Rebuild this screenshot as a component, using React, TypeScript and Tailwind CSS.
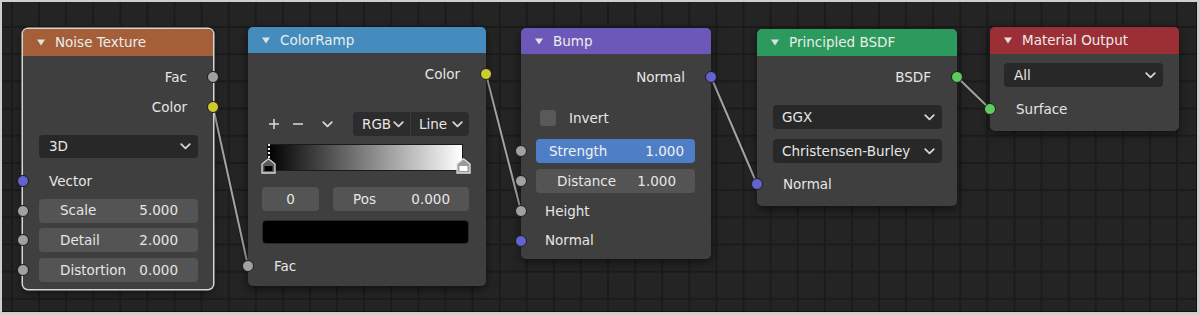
import React from "react";

type SockColor = "gray" | "yellow" | "blue" | "green";

function Socket({ side, color }: { side: "left" | "right"; color: SockColor }) {
  const c =
    color === "gray"
      ? "bg-[#a1a1a1]"
      : color === "yellow"
      ? "bg-[#cccc2e]"
      : color === "blue"
      ? "bg-[#6363cf]"
      : "bg-[#5fca5f]";
  const s = side === "left" ? "-left-[6px]" : "-right-[6px]";
  return (
    <span
      className={`absolute top-1/2 -translate-y-1/2 w-[12px] h-[12px] rounded-full border border-[#1c1c1c] ${s} ${c}`}
    />
  );
}

function Chevron() {
  return (
    <svg width="11" height="7" viewBox="0 0 11 7" className="shrink-0">
      <polyline points="1.2,1.2 5.5,5.4 9.8,1.2" fill="none" stroke="#d8d8d8" strokeWidth="1.7" strokeLinecap="round" strokeLinejoin="round" />
    </svg>
  );
}

function Tri() {
  return (
    <svg width="8" height="7" viewBox="0 0 8 7" className="shrink-0">
      <polygon points="0,0.5 8,0.5 4,6.5" fill="#e0e0e0" />
    </svg>
  );
}

function Header({ title, color }: { title: string; color: string }) {
  return (
    <div className={`flex items-center gap-[10px] pl-[14px] rounded-t-[5px] text-[#ececec] ${color}`}>
      <Tri />
      <span>{title}</span>
    </div>
  );
}

function Marker({ fill, inner, outline }: { fill: string; inner: string; outline: string }) {
  return (
    <svg width="15" height="16" viewBox="0 0 15 16">
      <polygon points="1,6 7.5,0.8 14,6 14,15 1,15" fill={fill} stroke={outline} strokeWidth="1.3" />
      <rect x="3.5" y="8" width="8" height="5" fill={inner} />
    </svg>
  );
}

export default function App() {
  return (
    <div className="w-[1200px] h-[315px] bg-[#cfcfcf] pl-[2px] pt-[2px] pr-[3px] pb-[3px] font-['DejaVu_Sans',sans-serif] text-[13.5px] text-[#e6e6e6]">
      <div className="relative w-full h-full overflow-hidden border-r border-b border-[#111] bg-[#242424] bg-[linear-gradient(to_right,#1b1b1b_2px,transparent_2px),linear-gradient(to_bottom,#1b1b1b_2px,transparent_2px)] bg-[size:27.1px_27.2px] bg-[position:9px_24px]">
        {/* links */}
        <svg className="absolute inset-0 pointer-events-none" width="1195" height="310">
          <g strokeLinecap="round">
            <line x1="211" y1="104.7" x2="246" y2="264" stroke="#1e1e1e" strokeWidth="4" />
            <line x1="484" y1="72" x2="519" y2="209" stroke="#1e1e1e" strokeWidth="4" />
            <line x1="709" y1="75" x2="755" y2="182" stroke="#1e1e1e" strokeWidth="4" />
            <line x1="955" y1="75" x2="988" y2="107" stroke="#1e1e1e" strokeWidth="4" />
            <line x1="211" y1="104.7" x2="246" y2="264" stroke="#a3a3a3" strokeWidth="2" />
            <line x1="484" y1="72" x2="519" y2="209" stroke="#a3a3a3" strokeWidth="2" />
            <line x1="709" y1="75" x2="755" y2="182" stroke="#a3a3a3" strokeWidth="2" />
            <line x1="955" y1="75" x2="988" y2="107" stroke="#a3a3a3" strokeWidth="2" />
          </g>
        </svg>

        {/* Noise Texture */}
        <div className="absolute left-[21px] top-[27px] w-[190px] h-[260px] rounded-[5px] bg-[#3f3f3f] shadow-[0_3px_10px_rgba(0,0,0,0.55)] ring-[1.5px] ring-[#d6d6d6] flex flex-col">
          <div className="h-[27px] flex flex-col [&>div]:h-full">
            <Header title="Noise Texture" color="bg-[#a45f39]" />
          </div>
          <div className="flex flex-col pt-[6px]">
            <div className="relative h-[30px] flex items-center justify-end pr-[26px]">
              Fac
              <Socket side="right" color="gray" />
            </div>
            <div className="relative h-[30px] flex items-center justify-end pr-[26px]">
              Color
              <Socket side="right" color="yellow" />
            </div>
            <div className="mt-[10px] h-[29px] flex items-center pl-[16px] pr-[15px]">
              <div className="w-full h-[23px] rounded-[4px] bg-[#282828] flex items-center justify-between pl-[10px] pr-[7px]">
                <span>3D</span>
                <Chevron />
              </div>
            </div>
            <div className="relative mt-[5px] h-[30px] flex items-center pl-[26px]">
              Vector
              <Socket side="left" color="blue" />
            </div>
            {[
              ["Scale", "5.000", "h-[29px]"],
              ["Detail", "2.000", "h-[30px]"],
              ["Distortion", "0.000", "h-[30px]"],
            ].map(([l, v, h]) => (
              <div key={l} className={`relative flex items-center pl-[16px] pr-[15px] ${h}`}>
                <div className="w-full h-[24px] rounded-[4px] bg-[#545454] flex items-center justify-between pl-[21px] pr-[20px]">
                  <span>{l}</span>
                  <span>{v}</span>
                </div>
                <Socket side="left" color="gray" />
              </div>
            ))}
          </div>
        </div>

        {/* ColorRamp */}
        <div className="absolute left-[246px] top-[25px] w-[238px] h-[259px] rounded-[5px] bg-[#3f3f3f] shadow-[0_3px_10px_rgba(0,0,0,0.55)] flex flex-col">
          <div className="h-[26px] flex flex-col [&>div]:h-full">
            <Header title="ColorRamp" color="bg-[#438cbd]" />
          </div>
          <div className="flex flex-col pt-[6px]">
            <div className="relative h-[30px] flex items-center justify-end pr-[26px]">
              Color
              <Socket side="right" color="yellow" />
            </div>
            <div className="mt-[23px] h-[24px] flex items-center pl-[20px] pr-[17px]">
              <div className="flex items-center gap-[12px] text-[#dedede]">
                <svg width="12" height="12" viewBox="0 0 12 12">
                  <path d="M6 1v10M1 6h10" stroke="#dcdcdc" strokeWidth="1.5" />
                </svg>
                <svg width="12" height="12" viewBox="0 0 12 12">
                  <path d="M1 6h10" stroke="#dcdcdc" strokeWidth="1.5" />
                </svg>
                <span className="ml-[6px]">
                  <Chevron />
                </span>
              </div>
              <div className="ml-auto flex h-[24px] rounded-[4px] bg-[#2c2c2c] overflow-hidden">
                <div className="w-[57px] flex items-center justify-between pl-[9px] pr-[6px]">
                  <span>RGB</span>
                  <Chevron />
                </div>
                <div className="w-[1px] bg-[#3a3a3a]" />
                <div className="w-[58px] flex items-center justify-between pl-[8px] pr-[6px]">
                  <span>Line</span>
                  <Chevron />
                </div>
              </div>
            </div>
            <div className="relative mt-[8px] ml-[19px] w-[196px] h-[27px]">
              <div className="w-full h-full border border-[#1a1a1a] bg-[linear-gradient(to_right,#000,#fff)]" />
              <div className="absolute left-[1px] top-[0px] h-[14px] border-l-[2px] border-dotted border-[#e8e8e8]" />
              <div className="absolute -left-[6px] top-[14px]">
                <Marker fill="#5a5a5a" inner="#000" outline="#d8d8d8" />
              </div>
              <div className="absolute -right-[8px] top-[14px]">
                <Marker fill="#9a9a9a" inner="#fff" outline="#e0e0e0" />
              </div>
            </div>
            <div className="mt-[16px] h-[24px] flex gap-[14px] pl-[14px] pr-[17px]">
              <div className="w-[57px] rounded-[4px] bg-[#545454] flex items-center justify-center">0</div>
              <div className="flex-1 rounded-[4px] bg-[#545454] flex items-center justify-between pl-[20px] pr-[19px]">
                <span>Pos</span>
                <span>0.000</span>
              </div>
            </div>
            <div className="mt-[9px] h-[24px] pl-[14px] pr-[17px]">
              <div className="w-full h-full rounded-[4px] bg-black border border-[#2a2a2a]" />
            </div>
            <div className="relative mt-[7px] h-[30px] flex items-center pl-[26px]">
              Fac
              <Socket side="left" color="gray" />
            </div>
          </div>
        </div>

        {/* Bump */}
        <div className="absolute left-[519px] top-[26px] w-[190px] h-[231px] rounded-[5px] bg-[#3f3f3f] shadow-[0_3px_10px_rgba(0,0,0,0.55)] flex flex-col">
          <div className="h-[26px] flex flex-col [&>div]:h-full">
            <Header title="Bump" color="bg-[#6c58b8]" />
          </div>
          <div className="flex flex-col pt-[8px]">
            <div className="relative h-[30px] flex items-center justify-end pr-[26px]">
              Normal
              <Socket side="right" color="blue" />
            </div>
            <div className="mt-[11px] h-[30px] flex items-center pl-[19px] gap-[13px]">
              <div className="w-[16px] h-[16px] rounded-[3px] bg-[#595959]" />
              <span>Invert</span>
            </div>
            <div className="relative mt-[6px] h-[24px] pl-[15px] pr-[16px]">
              <div className="w-full h-full rounded-[4px] bg-[#4e7fc6] flex items-center justify-between pl-[13px] pr-[11px] text-[#f0f0f0]">
                <span>Strength</span>
                <span>1.000</span>
              </div>
              <Socket side="left" color="gray" />
            </div>
            <div className="relative mt-[6px] h-[24px] pl-[15px] pr-[16px]">
              <div className="w-full h-full rounded-[4px] bg-[#545454] flex items-center justify-between pl-[21px] pr-[19px]">
                <span>Distance</span>
                <span>1.000</span>
              </div>
              <Socket side="left" color="gray" />
            </div>
            <div className="relative mt-[3px] h-[30px] flex items-center pl-[24px]">
              Height
              <Socket side="left" color="gray" />
            </div>
            <div className="relative h-[29px] flex items-center pl-[24px]">
              Normal
              <Socket side="left" color="blue" />
            </div>
          </div>
        </div>

        {/* Principled BSDF */}
        <div className="absolute left-[755px] top-[27px] w-[200px] h-[177px] rounded-[5px] bg-[#3f3f3f] shadow-[0_3px_10px_rgba(0,0,0,0.55)] flex flex-col">
          <div className="h-[27px] flex flex-col [&>div]:h-full">
            <Header title="Principled BSDF" color="bg-[#2c9a5c]" />
          </div>
          <div className="flex flex-col pt-[6px]">
            <div className="relative h-[30px] flex items-center justify-end pr-[26px]">
              BSDF
              <Socket side="right" color="green" />
            </div>
            <div className="mt-[13px] h-[24px] pl-[16px] pr-[15px]">
              <div className="w-full h-full rounded-[4px] bg-[#282828] flex items-center justify-between pl-[9px] pr-[7px]">
                <span>GGX</span>
                <Chevron />
              </div>
            </div>
            <div className="mt-[10px] h-[24px] pl-[16px] pr-[15px]">
              <div className="w-full h-full rounded-[4px] bg-[#282828] flex items-center justify-between pl-[9px] pr-[7px]">
                <span>Christensen-Burley</span>
                <Chevron />
              </div>
            </div>
            <div className="relative mt-[6px] h-[30px] flex items-center pl-[26px]">
              Normal
              <Socket side="left" color="blue" />
            </div>
          </div>
        </div>

        {/* Material Output */}
        <div className="absolute left-[988px] top-[25px] w-[189px] h-[104px] rounded-[5px] bg-[#3f3f3f] shadow-[0_3px_10px_rgba(0,0,0,0.55)] flex flex-col">
          <div className="h-[27px] flex flex-col [&>div]:h-full">
            <Header title="Material Output" color="bg-[#9c2e36]" />
          </div>
          <div className="flex flex-col pt-[9px]">
            <div className="h-[24px] pl-[14px] pr-[16px]">
              <div className="w-full h-full rounded-[4px] bg-[#282828] flex items-center justify-between pl-[10px] pr-[7px]">
                <span>All</span>
                <Chevron />
              </div>
            </div>
            <div className="relative mt-[7px] h-[30px] flex items-center pl-[26px]">
              Surface
              <Socket side="left" color="green" />
            </div>
          </div>
        </div>
      </div>
    </div>
  );
}
